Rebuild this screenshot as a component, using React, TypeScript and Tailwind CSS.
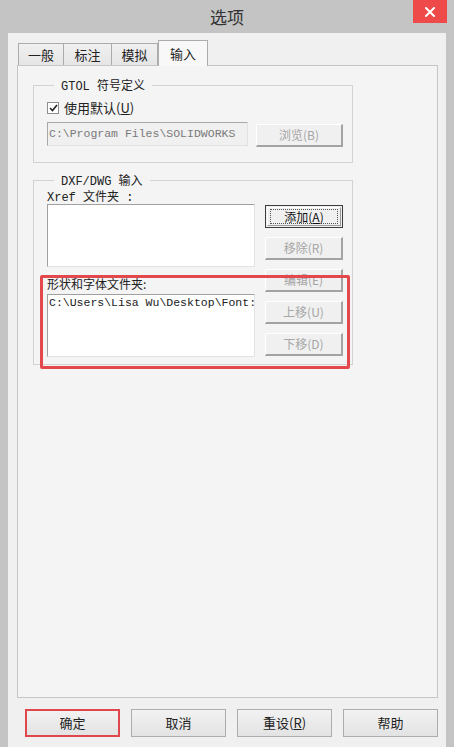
import React from "react";

const cjk = { fontFamily: '"Noto Sans CJK SC", "Noto Sans", sans-serif' };
const mono = { fontFamily: '"Liberation Mono", "Noto Sans CJK SC", monospace' };

function ClassicButton({ children, disabled, def }: { children: React.ReactNode; disabled?: boolean; def?: boolean }) {
  if (def) {
    return (
      <div className="h-[23px] w-[78px] border border-[#3c3c3c] bg-[#f0f0f0] p-[1px]">
        <div className="flex h-full w-full items-center justify-center border-b border-r border-[#9a9a9a] border-t-white border-l-white border-t border-l">
          <div className="flex h-[15px] w-[68px] items-center justify-center border border-dotted border-[#555] text-[12px] text-[#111]" style={cjk}>
            {children}
          </div>
        </div>
      </div>
    );
  }
  return (
    <div
      className={`flex h-[23px] w-[78px] items-center justify-center border-l border-t border-l-white border-t-white border-b-2 border-r-2 border-b-[#a3a3a3] border-r-[#a3a3a3] bg-[#f0f0f0] text-[12px] ${disabled ? "text-[#a6a6a6]" : "text-[#111]"}`}
      style={cjk}
    >
      {children}
    </div>
  );
}

function BottomButton({ children, red }: { children: React.ReactNode; red?: boolean }) {
  return (
    <div
      className={`flex h-[28px] w-[96px] items-center justify-center bg-gradient-to-b from-[#f2f2f2] to-[#e3e3e3] text-[13px] text-[#222] ${red ? "border-2 border-[#e0474c]" : "border border-[#adadad]"}`}
      style={cjk}
    >
      {children}
    </div>
  );
}

export default function App() {
  return (
    <div className="relative flex h-[747px] w-[454px] flex-col overflow-hidden bg-[#c4c4c4]">
      {/* Title bar */}
      <div className="relative flex h-[33px] shrink-0 items-center justify-center">
        <span className="text-[17px] text-[#333]" style={cjk}>选项</span>
        <div className="absolute left-[413px] top-0 flex h-[23px] w-[34px] items-center justify-center bg-[#ef4a4a]">
          <svg width="10" height="10" viewBox="0 0 10 10">
            <path d="M1 1 L9 9 M9 1 L1 9" stroke="white" strokeWidth="2" strokeLinecap="square" />
          </svg>
        </div>
      </div>

      {/* Client area */}
      <div className="mx-[8px] flex flex-1 flex-col bg-[#f0f0f0] pl-[9px] pr-[8px]">
        {/* Tabs */}
        <div className="mt-[8px] flex h-[24px] items-end pl-[1px]">
          {["一般", "标注", "模拟"].map((t, i) => (
            <div
              key={t}
              className={`flex h-[22px] items-center justify-center border border-b-0 border-[#acacac] bg-gradient-to-b from-[#f0f0f0] to-[#e5e5e5] text-[13px] text-[#222] ${i === 0 ? "w-[46px]" : i === 1 ? "w-[48px] border-l-0" : "w-[46px] border-l-0"}`}
              style={cjk}
            >
              {t}
            </div>
          ))}
          <div
            className="relative z-10 -mb-[1px] flex h-[26px] w-[50px] items-start justify-center border border-b-0 border-[#acacac] bg-[#f8f8f8] pt-[3px] text-[13px] text-[#222]"
            style={cjk}
          >
            输入
          </div>
        </div>

        {/* Tab panel */}
        <div className="flex h-[633px] flex-col border border-[#c6c6c6] bg-[#f4f4f4] pl-[15px]">
          {/* GTOL group */}
          <fieldset className="mt-[12px] w-[320px] border border-[#d2d2d2] pl-[13px] pr-[8px] pb-[15px]">
            <legend className="ml-[7px] h-[14px] px-[7px] text-[12px] leading-[14px] text-[#222]" style={mono}>
              GTOL <span style={cjk}>符号定义</span>
            </legend>
            <div className="mt-[10px] flex h-[12px] items-center">
              <div className="flex h-[12px] w-[12px] items-center justify-center border border-[#8e8e8e] bg-white">
                <svg width="9" height="8" viewBox="0 0 9 8">
                  <path d="M1 4 L3.5 6.5 L8 1" stroke="#222" strokeWidth="1.6" fill="none" />
                </svg>
              </div>
              <span className="ml-[5px] text-[13px] text-[#222]" style={cjk}>
                使用默认(<span className="underline">U</span>)
              </span>
            </div>
            <div className="mt-[8px] flex items-start">
              <div className="flex h-[24px] w-[201px] items-center overflow-hidden whitespace-nowrap border border-[#a8a8a8] border-b-[#e2e2e2] border-r-[#e2e2e2] bg-[#f0f0f0] pl-[1px] text-[11.5px] text-[#7a7a7a]" style={mono}>
                C:\Program Files\SOLIDWORKS
              </div>
              <div className="ml-[8px] mt-[2px]">
                <div
                  className="flex h-[23px] w-[87px] items-center justify-center border-l border-t border-l-white border-t-white border-b-2 border-r-2 border-b-[#a3a3a3] border-r-[#a3a3a3] bg-[#f0f0f0] text-[12px] text-[#a6a6a6]"
                  style={cjk}
                >
                  浏览(B)
                </div>
              </div>
            </div>
          </fieldset>

          {/* DXF/DWG group */}
          <fieldset className="mt-[10px] w-[320px] border border-[#d2d2d2] pl-[13px] pr-[8px] pb-[7px]">
            <legend className="ml-[7px] h-[14px] px-[7px] text-[12px] leading-[14px] text-[#222]" style={mono}>
              DXF/DWG <span style={cjk}>输入</span>
            </legend>
            <div className="flex pt-[2px]">
              <div className="flex w-[208px] flex-col">
                <div className="h-[14px] text-[12px] leading-[14px] text-[#222]" style={mono}>
                  Xref <span style={cjk}>文件夹</span> :
                </div>
                <div className="mt-[1px] h-[63px] border border-[#a0a0a0] border-b-[#e3e3e3] border-r-[#e3e3e3] bg-white" />
                <div className="mt-[10px] h-[14px] text-[12px] leading-[14px] text-[#222]" style={cjk}>
                  形状和字体文件夹:
                </div>
                <div className="mt-[3px] h-[63px] overflow-hidden whitespace-nowrap border border-[#a0a0a0] border-b-[#e3e3e3] border-r-[#e3e3e3] bg-white pl-[1px] pt-[1px] text-[11.5px] leading-[14px] text-[#222]" style={mono}>
                  C:\Users\Lisa Wu\Desktop\Font:
                </div>
              </div>
              <div className="ml-[10px] mt-[16px] flex flex-col gap-[9px]">
                <ClassicButton def>
                  添加(<span className="underline">A</span>)
                </ClassicButton>
                <ClassicButton disabled>移除(R)</ClassicButton>
                <ClassicButton disabled>编辑(E)</ClassicButton>
                <ClassicButton disabled>上移(U)</ClassicButton>
                <ClassicButton disabled>下移(D)</ClassicButton>
              </div>
            </div>
          </fieldset>
        </div>

        {/* Bottom buttons */}
        <div className="mt-[11px] flex gap-[11px] pl-[8px]">
          <BottomButton red>确定</BottomButton>
          <BottomButton>取消</BottomButton>
          <BottomButton>
            重设(<span className="underline">R</span>)
          </BottomButton>
          <BottomButton>帮助</BottomButton>
        </div>
      </div>

      {/* Red annotation */}
      <div className="pointer-events-none absolute left-[40px] top-[275px] h-[94px] w-[310px] rounded-[2px] border-[3px] border-[#e3484c]" />
    </div>
  );
}
